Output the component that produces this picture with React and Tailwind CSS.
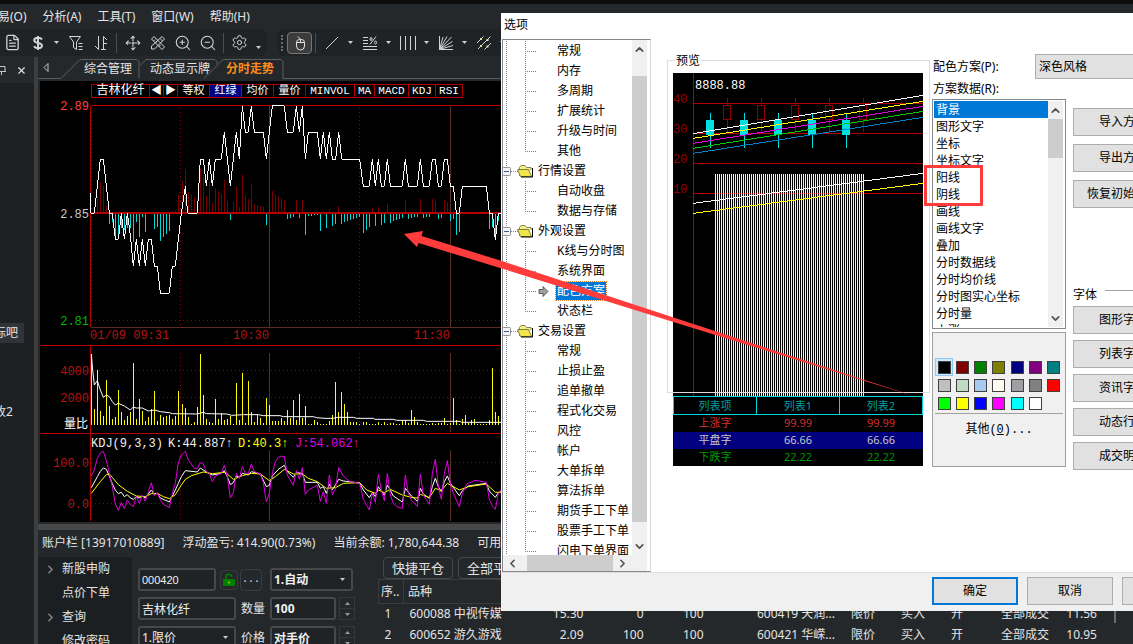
import React, { useState } from 'react';
import clsx from 'clsx';
import { FileText, Move, ZoomIn, ZoomOut, Settings, X, ChevronRight, ChevronUp, ChevronDown, ChevronLeft } from 'lucide-react';

const menus = ['交易(O)', '分析(A)', '工具(T)', '窗口(W)', '帮助(H)'];

const indicators = [
  { label: '吉林化纤', width: 'w-[58px]' },
  { label: '◀', width: 'w-[14px]' },
  { label: '▶', width: 'w-[14px]' },
  { label: '等权', width: 'w-8' },
  { label: '红绿', width: 'w-8', active: true },
  { label: '均价', width: 'w-8' },
  { label: '量价', width: 'w-8' },
  { label: 'MINVOL', width: 'w-[49px]' },
  { label: 'MA', width: 'w-5' },
  { label: 'MACD', width: 'w-[34px]' },
  { label: 'KDJ', width: 'w-[27px]' },
  { label: 'RSI', width: 'w-[27px]' },
];

// Chart series are kept in a 3x grid, one minute is 9 units wide
const price =
  '182,354 183,415 193,415 202,334 211,253 220,253 229,334 238,415 247,415 256,493 265,493 274,415 283,493 292,415 301,480 310,574 319,493 328,574 337,493 346,574 355,493 364,493 373,574 382,574 391,655 418,655 427,574 436,574 445,493 454,415 466,334 473,415 502,415 511,253 520,253 529,334 538,253 547,334 556,253 574,253 583,172 592,253 601,334 610,253 619,172 628,253 637,92 646,172 655,172 664,92 673,172 700,172 709,253 718,172 727,92 763,92 772,172 790,172 799,92 808,172 817,92 826,253 835,172 862,172 871,253 880,172 889,253 898,172 907,253 917,253 926,172 935,253 989,253 1000,334 1018,334 1027,253 1036,334 1045,253 1054,334 1063,334 1072,253 1081,334 1117,334 1126,253 1135,334 1162,334 1171,253 1180,334 1198,334 1207,253 1216,253 1225,334 1234,334 1243,253 1252,253 1261,334 1270,334 1279,415 1288,415 1297,334 1369,334 1378,415 1387,415 1396,495 1405,415 1430,415';

const upBars = [
  [202, 362], [211, 320], [220, 333], [229, 393], [427, 407], [436, 407], [445, 360], [458, 318], [467, 282], [476, 350],
  [485, 357], [494, 366], [503, 372], [512, 282], [520, 300], [529, 363], [538, 320], [547, 384], [556, 339], [565, 348],
  [574, 357], [583, 315], [592, 378], [610, 381], [619, 336], [628, 396], [637, 300], [646, 363], [655, 372], [664, 327],
  [673, 387], [682, 390], [691, 393], [700, 396], [727, 348], [736, 357], [745, 363], [754, 369], [763, 375], [799, 375],
  [817, 375], [880, 408], [898, 402], [926, 393], [1027, 399], [1045, 396], [1072, 387], [1126, 375], [1171, 372],
  [1207, 372], [1216, 378], [1243, 375], [1252, 381],
];

const downBars = [
  [238, 447], [247, 441], [256, 487], [265, 486], [274, 460], [283, 465], [292, 460], [301, 459], [310, 500], [319, 441],
  [328, 486], [337, 426], [346, 471], [373, 462], [382, 456], [391, 498], [400, 486], [409, 477], [418, 468], [601, 435],
  [709, 450], [772, 432], [781, 429], [790, 426], [808, 429], [826, 480], [835, 422], [844, 422], [853, 420], [862, 420],
  [871, 468], [889, 459], [907, 453], [916, 447], [935, 447], [943, 441], [952, 438], [961, 435], [970, 432], [979, 429],
  [988, 426], [1000, 474], [1009, 465], [1018, 456], [1036, 453], [1054, 450], [1063, 444], [1081, 444], [1090, 438],
  [1099, 435], [1108, 432], [1117, 429], [1135, 432], [1144, 429], [1153, 426], [1162, 426], [1180, 429], [1189, 426],
  [1198, 426], [1225, 432], [1234, 429], [1261, 438], [1270, 432], [1279, 480], [1288, 471], [1378, 462], [1387, 456],
  [1396, 495], [1405, 438],
];

const volumes = [
  [184, 42], [193, 207], [202, 90], [211, 212], [220, 228], [229, 120], [238, 197], [247, 237], [256, 231], [265, 150],
  [274, 216], [283, 240], [292, 228], [301, 216], [310, 69], [319, 237], [328, 177], [337, 213], [346, 243], [355, 231],
  [364, 207], [373, 153], [382, 243], [391, 225], [400, 231], [409, 228], [418, 225], [427, 237], [436, 228], [445, 153],
  [457, 192], [466, 204], [475, 231], [484, 251], [493, 246], [502, 201], [511, 42], [520, 165], [529, 237], [538, 246],
  [547, 249], [556, 177], [565, 237], [574, 219], [583, 240], [592, 237], [601, 228], [610, 251], [619, 129], [628, 240],
  [637, 99], [646, 249], [655, 123], [664, 216], [673, 246], [682, 222], [691, 234], [700, 249], [709, 174], [718, 195],
  [727, 243], [736, 243], [745, 243], [754, 234], [763, 243], [772, 210], [781, 234], [790, 180], [799, 240], [808, 162],
  [817, 234], [826, 198], [835, 251], [844, 251], [853, 240], [862, 246], [871, 251], [880, 251], [889, 251], [898, 243],
  [907, 225], [916, 126], [925, 216], [934, 156], [943, 192], [952, 216], [961, 246], [970, 246], [979, 246], [988, 251],
  [1000, 246], [1009, 246], [1018, 251], [1027, 251], [1036, 251], [1045, 246], [1054, 251], [1063, 246], [1072, 251],
  [1081, 249], [1090, 249], [1099, 251], [1108, 251], [1117, 243], [1126, 240], [1135, 249], [1144, 210], [1153, 231],
  [1162, 246], [1171, 251], [1180, 251], [1189, 251], [1198, 251], [1207, 249], [1216, 251], [1225, 249], [1234, 249],
  [1243, 234], [1252, 251], [1261, 249], [1270, 174], [1279, 240], [1288, 251], [1297, 237], [1306, 225], [1315, 249],
  [1324, 240], [1333, 237], [1342, 251], [1351, 251], [1360, 251], [1369, 251], [1378, 240], [1387, 84], [1396, 216],
  [1405, 228],
];

const volumeRatio =
  '184,42 188,90 193,135 202,122 211,150 220,172 229,165 238,170 247,185 256,195 265,190 283,198 301,210 310,201 319,204 337,204 355,213 373,210 391,215 418,218 427,221 500,222 520,217 530,221 590,222 605,226 640,224 685,224 700,227 750,227 760,230 850,230 860,233 885,235 910,235 922,232 970,232 980,235 1030,235 1035,238 1090,238 1100,241 1180,241 1190,244 1290,244 1295,247 1430,247';

const lineJ =
  '184,408 193,390 202,355 211,338 220,334 229,362 238,400 247,440 256,492 265,511 274,487 283,506 292,480 301,494 310,500 319,470 328,490 337,465 346,484 355,455 364,428 373,467 382,458 391,480 400,493 418,503 427,460 436,430 445,367 454,345 466,334 475,360 493,385 502,386 511,368 520,372 529,395 538,400 547,425 556,408 574,400 583,375 592,410 601,474 610,458 619,400 628,415 637,380 646,400 655,400 664,372 673,395 691,402 700,428 709,486 718,460 727,400 736,365 745,352 754,349 763,349 772,405 790,436 799,392 808,418 817,383 826,463 835,450 862,436 871,484 880,455 889,490 898,405 907,464 916,448 926,383 940,408 960,425 989,430 1000,478 1018,510 1027,460 1036,487 1045,403 1054,450 1063,482 1072,400 1081,465 1090,490 1100,500 1117,505 1126,405 1135,460 1144,480 1162,499 1171,403 1180,465 1198,493 1207,400 1216,358 1225,440 1234,478 1243,400 1252,362 1261,430 1270,460 1288,500 1297,460 1310,432 1335,421 1369,427 1378,478 1387,498 1396,508 1405,460 1430,430';

const lineK =
  '184,443 202,410 211,394 220,384 229,388 238,408 247,432 256,450 265,461 274,457 283,470 292,464 301,474 310,478 319,470 328,474 337,468 346,474 355,462 364,450 373,463 382,460 391,474 418,486 427,468 436,450 445,430 454,410 466,392 502,396 511,384 529,396 547,405 574,400 583,392 592,410 601,434 610,428 619,408 628,412 637,400 655,405 664,395 691,402 709,440 718,436 727,408 745,388 763,376 772,395 790,412 799,398 817,400 826,427 862,427 871,445 880,440 889,460 898,432 907,450 926,418 940,423 989,429 1000,450 1018,473 1027,458 1036,470 1045,440 1063,466 1072,435 1090,468 1117,486 1126,445 1144,468 1162,484 1171,445 1180,462 1198,475 1207,440 1216,415 1225,440 1234,455 1243,425 1252,408 1261,430 1288,467 1297,452 1315,438 1369,430 1378,453 1396,472 1405,458 1430,450';

const lineD =
  '184,460 211,425 229,404 238,402 247,412 265,434 292,454 319,468 346,470 364,461 382,460 400,470 418,476 436,464 454,435 466,418 484,407 520,396 547,401 583,397 592,402 610,418 637,407 664,400 691,402 718,422 736,410 763,388 790,402 817,402 835,415 862,425 889,445 916,443 940,430 989,428 1010,450 1036,460 1045,450 1063,458 1081,448 1117,465 1144,472 1162,474 1171,463 1198,473 1216,445 1234,452 1252,430 1288,450 1315,440 1369,432 1396,457 1430,456';

const treeGroups = [
  { items: ['常规', '内存', '多周期', '扩展统计', '升级与时间', '其他'] },
  { name: '行情设置', items: ['自动收盘', '数据与存储'] },
  { name: '外观设置', items: ['K线与分时图', '系统界面', '配色方案', '状态栏'] },
  {
    name: '交易设置',
    items: ['常规', '止损止盈', '追单撤单', '程式化交易', '风控', '帐户', '大单拆单', '算法拆单', '期货手工下单', '股票手工下单', '闪电下单界面'],
  },
];

const schemeData = [
  '背景', '图形文字', '坐标', '坐标文字', '阳线', '阴线', '画线', '画线文字', '叠加',
  '分时数据线', '分时均价线', '分时图实心坐标', '分时量', '上涨',
];

const swatches = [
  'bg-[#000000]', 'bg-[#800000]', 'bg-[#008000]', 'bg-[#808000]', 'bg-[#000080]', 'bg-[#800080]', 'bg-[#008080]',
  'bg-[#c0c0c0]', 'bg-[#c0dcc0]', 'bg-[#a6caf0]', 'bg-[#fffbf0]', 'bg-[#a0a0a4]', 'bg-[#808080]', 'bg-[#ff0000]',
  'bg-[#00ff00]', 'bg-[#ffff00]', 'bg-[#0000ff]', 'bg-[#ff00ff]', 'bg-[#00ffff]', 'bg-[#ffffff]',
];

const previewRows = [
  { name: '上涨字', value: '99.99', style: 'text-[#d03030]' },
  { name: '平盘字', value: '66.66', style: 'bg-[#000080] text-[#c8c8c8]' },
  { name: '下跌字', value: '22.22', style: 'text-[#009a00]' },
];

const positions = [
  ['1', '600088 中视传媒', '15.30', '0', '100'],
  ['2', '600652 游久游戏', '2.09', '100', '100'],
];

const orders = [
  ['600419 天润...', '限价', '买入', '开', '全部成交', '11.56'],
  ['600421 华嵘...', '限价', '买入', '开', '全部成交', '10.95'],
];

const Caret = () => (
  <span className="flex w-[13px] justify-center">
    <svg width="5" height="3" fill="#d0d0d0"><path d="M0 0h5L2.5 3z" /></svg>
  </span>
);

const Divider = () => (
  <span className="flex w-[7px] justify-center">
    <span className="h-5 w-px bg-[#4b4e51]" />
  </span>
);

const ToolButton = ({ label, children }) => (
  <button aria-label={label} className="flex h-6 w-[25px] items-center justify-center text-[#d4d4d4]">
    {children}
  </button>
);

const Icon = ({ children }) => (
  <svg width="16" height="16" viewBox="0 0 16 16" fill="none" stroke="currentColor" strokeWidth="1">
    {children}
  </svg>
);

const Toolbar = () => (
  <div className="flex h-[29px] items-center">
    <div className="flex h-[27px] items-center rounded-r-md bg-[#1f2326] pr-0.5">
      <ToolButton label="文件"><FileText size={17} strokeWidth={1.8} /></ToolButton>
      <ToolButton label="资金">
        <Icon>
          <path strokeWidth="2" d="M12 4.500C11 3 9.500 2.800 8 2.800 5.500 2.800 4.200 3.800 4.200 5.300 4.200 9 12 6.800 12 10.600 12 12.300 10.300 13.200 8 13.200 6 13.200 4.700 12.600 4 11.300M8 1v14" />
        </Icon>
      </ToolButton>
      <Caret />
      <ToolButton label="筛选">
        <Icon><path d="M1.500 1.500h11L8.500 7v7.500l-3-2V7zM10.500 8.500h4M10.500 11.500h4M10.500 14.500h4" /></Icon>
      </ToolButton>
      <ToolButton label="排序">
        <Icon><path d="M5.500 1v13.500L2 11M10.500 15V1.500L14 5M8 14.500h5M11 8.500h3" /></Icon>
      </ToolButton>
      <Divider />
      <ToolButton label="移动"><Move size={16} strokeWidth={1.6} strokeDasharray="7 2" /></ToolButton>
      <ToolButton label="画图工具">
        <Icon>
          <path d="M1.500 4l2.500-2.500L14.500 12 12 14.500zM12 1.500L14.500 4 4.500 14H1.500v-3zM3.500 6l1.500-1.500M5.500 8L7 6.500M9 11.500l1.500-1.500M10 3.500l2.500 2.500" />
        </Icon>
      </ToolButton>
      <ToolButton label="放大"><ZoomIn size={18} strokeWidth={1.4} /></ToolButton>
      <ToolButton label="缩小"><ZoomOut size={18} strokeWidth={1.4} /></ToolButton>
      <Divider />
      <ToolButton label="设置"><Settings size={17} strokeWidth={1.4} /></ToolButton>
      <span className="pt-2.5"><Caret /></span>
    </div>
    <div className="ml-2.5 flex h-[27px] flex-1 items-center rounded-l-md bg-[#1f2326]">
      <span className="flex w-2.5 justify-center">
        <span className="h-4 border-l-2 border-dotted border-[#6a6d70]" />
      </span>
      <button aria-label="鼠标" className="flex h-[22px] w-[25px] items-center justify-center rounded border border-[#757575] bg-[#3c3c3c] text-[#e4e4e4]">
        <Icon>
          <path d="M4.500 7.500h8v3.500a4 4 0 0 1-8 0V7.500a3 3 0 0 1 3-3h2a3 3 0 0 1 3 3M8.500 4.500v3M8.500 4.500C8.500 3 6 3 6 1.500" />
        </Icon>
      </button>
      <Divider />
      <ToolButton label="直线"><Icon><path d="M2 14L14 2" /></Icon></ToolButton>
      <Caret />
      <ToolButton label="百分比线">
        <Icon><path d="M1 2.500h5M1 5.500h5M1 8.500h5M1 11.500h14M1 14.500h14M14 1.500L8 9.500M8 4a1 1.500 0 1 0 2 0 1 1.500 0 1 0-2 0M12.500 7.500a1 1.500 0 1 0 2 0 1 1.500 0 1 0-2 0" /></Icon>
      </ToolButton>
      <Caret />
      <ToolButton label="周期线"><Icon><path d="M.5 1v14M5.500 1v14M10.500 1v14M15.500 1v14" /></Icon></ToolButton>
      <Caret />
      <ToolButton label="甘氏线">
        <Icon><path d="M1.500 1v13.500H15M1.500 14.500L5 2M1.500 14.500L9 1.500M1.500 14.500L13.500 2M1.500 14.500l13-8M1.500 14.500l13.500-4" /></Icon>
      </ToolButton>
      <Caret />
      <ToolButton label="平行线">
        <Icon>
          <path d="M1 8l6.500-6.500M2 14L14.500 1.500M8.500 14.500l6.500-6.500" />
          <g fill="#e0e0a0" stroke="none"><path d="M4 3h2v2H4zM10.500 4h2v2h-2zM4 10h2v2H4zM10.500 10.500h2v2h-2z" /></g>
        </Icon>
      </ToolButton>
      <Caret />
    </div>
  </div>
);

const TabBar = () => (
  <div className="relative flex h-6 items-start text-[#e4e4e4]">
    <svg className="absolute inset-0" width="100%" height="24" fill="none" stroke="#5b5e60">
      <path d="M0 21.500h23L42 2.500h57l2 2v17" />
      <path d="M102 8.500l6-6h69l2 2v3" />
      <path fill="#24282b" d="M166 21.500l19-19h58l2 2v17" />
      <path d="M245 21.500h1200" />
    </svg>
    <button aria-label="向左" className="relative mt-1.5 ml-1">
      <svg width="8" height="9" fill="none" stroke="#c0c0c0"><path d="M6 .5v8L2 4.500z" /></svg>
    </button>
    <button className="relative ml-[34px] h-6 leading-6">综合管理</button>
    <button className="relative ml-[18px] h-6 leading-6">动态显示牌</button>
    <button className="relative ml-4 h-6 font-bold leading-6 text-[#ff8c1a]">分时走势</button>
  </div>
);

const Chart = () => (
  <div className="ml-0.5 bg-black pt-[3px] font-['Liberation_Mono','Noto_Sans_CJK_SC',monospace] text-xs">
    <div className="ml-[51px] flex h-[14px] w-fit border border-r-0 border-[#b40000] text-white">
      {indicators.map((item) => (
        <button
          key={item.label}
          className={clsx(
            item.width,
            item.active && 'bg-[#000080]',
            'flex h-3 shrink-0 items-center justify-center border-r border-[#b40000] text-[11px] leading-3 first:text-xs'
          )}
        >
          {item.label}
        </button>
      ))}
    </div>
    <svg className="block w-full" height="424" shapeRendering="crispEdges">
      {/* price pane */}
      <g transform="translate(-10 -23) scale(0.33333)" fill="none" strokeWidth="3">
        <path stroke="#5a2f20" d="M718 92v665M1261 92v665M182 757h2000" />
        <g stroke="#8e0000" strokeDasharray="3 9">
          <path d="M185 100v655M451 100v655M988 100v655M194 736h2000" />
        </g>
        <path stroke="#b40000" d="M182 757V92h2000" />
        <g stroke="#780000">{upBars.map(([x, y]) => <path key={x} d={`M${x} 411V${y}`} />)}</g>
        <g stroke="#00d8d8">{downBars.map(([x, y]) => <path key={x} d={`M${x} 416V${y}`} />)}</g>
        <path stroke="#b40000" strokeWidth="6" d="M182 413h2000" />
        <polyline stroke="#fff" points={price} />
      </g>
      {/* volume and KDJ panes */}
      <g transform="translate(-10 242) scale(0.33333)" fill="none" strokeWidth="3">
        <path stroke="#5a2f20" d="M718 40v235M718 330v213M1261 40v235M1261 330v213" />
        <g stroke="#8e0000" strokeDasharray="3 9">
          <path d="M451 40v235M988 40v235M451 330v213M988 330v213M185 330v213" />
          <path d="M194 92h2000M194 172h2000M194 367h2000M194 490h2000" />
        </g>
        <path stroke="#b40000" d="M30 16h2000M30 281h2000M182 16v527" />
        <g stroke="#ff0">{volumes.map(([x, y]) => <path key={x} d={`M${x} 255V${y}`} />)}</g>
        <g shapeRendering="auto">
          <polyline stroke="#fff" points={volumeRatio} />
          <polyline stroke="#fff" points={lineK} />
          <polyline stroke="#ff0" points={lineD} />
          <polyline stroke="#e000e0" points={lineJ} />
        </g>
      </g>
      <g fill="#b41414">
        <text x="49" y="12" textAnchor="end" fill="#ff4040">2.89</text>
        <text x="49" y="120" textAnchor="end" fill="#c8c8c8">2.85</text>
        <text x="49" y="227" textAnchor="end" fill="#00b400">2.81</text>
        <text x="50" y="241">01/09 09:31</text>
        <text x="193" y="241">10:30</text>
        <text x="374" y="241">11:30</text>
        <text x="49" y="277" textAnchor="end">4000</text>
        <text x="49" y="304" textAnchor="end">2000</text>
        <text x="48" y="330" textAnchor="end" fill="#fff">量比</text>
        <text x="49" y="369" textAnchor="end">100.0</text>
        <text x="49" y="410" textAnchor="end">0.0</text>
      </g>
      <text y="349" fill="#f0f0f0">
        <tspan x="51">KDJ(9,3,3)</tspan>
        <tspan x="128">K:44.887↑</tspan>
        <tspan x="198" fill="#ff0">D:40.3↑</tspan>
        <tspan x="255" fill="#e000e0">J:54.062↑</tspan>
      </text>
    </svg>
  </div>
);

const fieldStyle = 'h-[23px] rounded-[3px] border-2 border-[#46484a] bg-[#1f2326] px-0.5 text-[#f0f0f0] outline-none';

const Spinner = () => (
  <span className="flex h-[23px] w-4 flex-col border border-[#34383b] text-[#9a9a9a]">
    <button type="button" aria-label="增加" className="flex flex-1 items-center justify-center border-b border-[#34383b]">
      <svg width="5" height="3" fill="currentColor"><path d="M0 3h5L2.500 0z" /></svg>
    </button>
    <button type="button" aria-label="减少" className="flex flex-1 items-center justify-center">
      <svg width="5" height="3" fill="currentColor"><path d="M0 0h5L2.500 3z" /></svg>
    </button>
  </span>
);

const DarkSelect = ({ label, value, className }) => (
  <span className={clsx('relative flex', className)}>
    <select aria-label={label} className={clsx(fieldStyle, 'w-full appearance-none')}>
      <option>{value}</option>
    </select>
    <svg className="pointer-events-none absolute top-2.5 right-2" width="5" height="3" fill="#c8c8c8"><path d="M0 0h5L2.500 3z" /></svg>
  </span>
);

const OrderForm = () => (
  <form className="flex w-[246px] shrink-0 flex-col gap-1.5 pt-[11px] pl-1.5">
    <div className="flex items-center">
      <input aria-label="代码" defaultValue="000420" className={clsx(fieldStyle, "w-[78px] font-['Liberation_Sans',sans-serif] text-[11px]")} />
      <button type="button" aria-label="锁定" className="ml-1 flex h-5 w-[18px] items-center justify-center rounded border border-[#3a3d40]">
        <svg width="12" height="13" viewBox="0 0 12 13" fill="none">
          <path stroke="#008000" strokeWidth="1.500" d="M3 6V3.500C3 .5 8.500 .5 8.500 3V4" />
          <path fill="#008000" d="M0 6h12v7H0z" />
          <path fill="#ff0" d="M5.500 8.500h1v2h-1z" />
        </svg>
      </button>
      <button type="button" className="ml-0.5 h-[22px] w-[22px] rounded border border-[#3a3d40] font-['Liberation_Mono',monospace] text-[10px] leading-4">...</button>
      <DarkSelect label="开平" value="1.自动" className="ml-2 w-[83px] font-bold" />
    </div>
    <div className="flex items-center">
      <input aria-label="名称" defaultValue="吉林化纤" className={clsx(fieldStyle, 'w-[98px]')} />
      <label htmlFor="amount" className="ml-[5px] w-[29px]">数量</label>
      <input id="amount" defaultValue="100" className={clsx(fieldStyle, 'w-[66px] font-bold')} />
      <span className="ml-[3px]"><Spinner /></span>
    </div>
    <div className="flex items-center">
      <DarkSelect label="委托类型" value="1.限价" className="w-[98px]" />
      <label htmlFor="price" className="ml-[5px] w-[29px]">价格</label>
      <input id="price" defaultValue="对手价" className={clsx(fieldStyle, 'w-[66px] font-bold')} />
      <span className="ml-[3px]"><Spinner /></span>
    </div>
  </form>
);

const Trading = () => (
  <div className="flex flex-1 overflow-hidden">
    <ul className="w-[94px] shrink-0 bg-[#1b1f21] leading-6">
      {['新股申购', '点价下单', '查询', '修改密码'].map((name, i) => (
        <li key={name} className="flex items-center pl-1.5">
          <span className="w-[18px]">{i % 2 === 0 && <ChevronRight size={13} strokeWidth={3} className="text-[#808080]" />}</span>
          {name}
        </li>
      ))}
    </ul>
    <OrderForm />
    <div className="min-w-0 flex-1">
      <div className="flex gap-[5px] pl-[5px] text-[13px]">
        <button className="h-[22px] w-[70px] rounded border border-[#45484b] leading-5">快捷平仓</button>
        <button className="h-[22px] w-[70px] rounded border border-[#45484b] leading-5">全部平仓</button>
      </div>
      <div className="flex">
        <table className="w-[347px] table-fixed border-collapse text-right">
          <thead>
            <tr className="h-6 border border-[#3a3d40] text-left">
              <th className="w-[25px] border border-[#3a3d40] pl-0.5 font-normal">序..</th>
              <th className="w-[120px] pl-1 font-normal">品种</th>
              <th className="w-[60px]" />
              <th className="w-[60px]" />
              <th className="w-[60px]" />
              <th />
            </tr>
          </thead>
          <tbody>
            {positions.map((row) => (
              <tr key={row[0]} className="h-[21px]">
                <td className="pl-1.5 text-left">{row[0]}</td>
                <td className="pl-1.5 text-left whitespace-nowrap">{row[1]}</td>
                <td>{row[2]}</td>
                <td>{row[3]}</td>
                <td>{row[4]}</td>
              </tr>
            ))}
          </tbody>
        </table>
        <table className="ml-[26px] w-[346px] table-fixed border-collapse text-left">
          <thead>
            <tr className="h-6">
              <th className="w-[94px]" />
              <th className="w-[50px]" />
              <th className="w-[50px]" />
              <th className="w-[50px]" />
              <th className="w-[60px]" />
              <th />
            </tr>
          </thead>
          <tbody>
            {orders.map((row) => (
              <tr key={row[0]} className="h-[21px] whitespace-nowrap">
                {row.map((cell) => (
                  <td key={cell} className="pl-1.5 last:pl-0 last:text-right">{cell}</td>
                ))}
              </tr>
            ))}
          </tbody>
        </table>
        <div className="ml-[17px] h-11 w-0.5 shrink-0 bg-[#6a6d70]" />
      </div>
    </div>
  </div>
);

const ItemGuide = ({ last, active }) => (
  <svg width="54" height="20" className="shrink-0" shapeRendering="crispEdges">
    <g stroke="#808080" strokeDasharray="1 1">
      <path d="M3.500 0v20" />
      <path d={last ? 'M22.500 0v10' : 'M22.500 0v20'} />
      <path d="M22 10.500h11" />
    </g>
    {active && <path d="M36 8.500h4v-3l5 5-5 5v-3h-4z" fill="#a0a0a0" stroke="#303030" strokeWidth=".7" shapeRendering="auto" />}
  </svg>
);

const GroupGuide = () => (
  <svg width="35" height="20" className="shrink-0">
    <path d="M3.500 0v20M8 10.500h7" stroke="#808080" strokeDasharray="1 1" />
    <rect x="-.5" y="6.500" width="8" height="8" rx="1" fill="#f4f4f4" stroke="#909090" />
    <path d="M1 10.500h5" stroke="#3c5aa0" />
    <path d="M16.500 15V6.500l1.500-2h4l1.500 2H28v2.500" fill="#f8f080" stroke="#808060" />
    <path d="M14.500 8.500h11l3 7h-11z" fill="#f0e64a" stroke="#808040" />
    <path d="M29.500 7v9H18" fill="none" stroke="#000" />
  </svg>
);

const ScrollBar = ({ thumb }) => (
  <div className="flex w-[15px] shrink-0 flex-col items-center bg-[#f0f0f0] text-[#505050]">
    <button aria-label="向上滚动" className="flex h-[18px] items-center"><ChevronUp size={13} strokeWidth={3} /></button>
    <div className={clsx('w-full bg-[#cdcdcd]', thumb)} />
    <button aria-label="向下滚动" className="mt-auto flex h-[18px] items-center"><ChevronDown size={13} strokeWidth={3} /></button>
  </div>
);

const OptionsTree = ({ selected, onSelect }) => (
  <div className="mt-px ml-px flex w-[149px] shrink-0 flex-col overflow-hidden border border-[#828790] border-r-[#d8d8d8] bg-white pr-[3px]">
    <div className="flex h-[515px]">
      <ul className="flex-1 overflow-hidden pt-px whitespace-nowrap">
        {treeGroups.map((group, g) => (
          <li key={g}>
            {group.name && (
              <div className="flex h-5 items-center"><GroupGuide />{group.name}</div>
            )}
            <ul>
              {group.items.map((name, i) => {
                const active = selected === name;
                return (
                  <li key={name} className="flex h-5 cursor-default items-center" onClick={() => onSelect(name)}>
                    <ItemGuide last={i === group.items.length - 1} active={active} />
                    <span className={clsx('-mx-px px-px leading-[18px]', active && 'bg-[#0078d7] text-white outline-1 outline-dotted outline-[#e08020]')}>
                      {name}
                    </span>
                  </li>
                );
              })}
            </ul>
          </li>
        ))}
      </ul>
      <ScrollBar thumb="mt-[18px] h-[446px]" />
    </div>
    <div className="flex h-4 items-center bg-[#f0f0f0] text-[#505050]">
      <button aria-label="向左滚动" className="w-6 pl-[3px]"><ChevronLeft size={13} strokeWidth={3} /></button>
      <div className="h-full w-[86px] bg-[#cdcdcd]" />
      <button aria-label="向右滚动" className="pl-[3px]"><ChevronRight size={13} strokeWidth={3} /></button>
    </div>
  </div>
);

const Preview = () => (
  <section className="relative mt-[14px] ml-4 w-[263px] shrink-0 pl-1.5">
    <h2 className="relative z-10 ml-0.5 h-[18px] w-fit bg-white px-px leading-[18px]">预览</h2>
    <div className="relative mt-[3px] w-[250px] bg-black font-['Liberation_Mono','Noto_Sans_CJK_SC',monospace] text-xs">
      <svg className="block w-full" height="323" shapeRendering="crispEdges">
        <g transform="translate(-13 -33) scale(0.33333)" fill="none" strokeWidth="3">
          <path stroke="#b40000" d="M100 99v969M100 190h689M100 280h689M100 370h689M100 460h689" />
          {[202, 304, 406, 508, 610].map((x) => (
            <path key={x} stroke="#960000" d={`M${x} 175v21M${x - 11} 196h21v43h-21zM${x} 239v38`} />
          ))}
          {[151, 253, 355, 457, 559].map((x) => (
            <g key={x}>
              <path stroke="#00e0e0" d={`M${x} 219v105`} />
              <path fill="#00e0e0" d={`M${x - 13} 240h24v45h-24z`} />
            </g>
          ))}
          <path stroke="#ffff80" strokeWidth="666" strokeDasharray="3 3" d="M166 735h445" />
          <path stroke="#fff" d="M100 281L789 166M100 490l689-90" />
          <path stroke="#ff0" d="M100 295l689-111M100 520l689-90" />
          <path stroke="#e000e0" d="M100 310l689-111" />
          <path stroke="#00c800" d="M100 325l689-111" />
          <path stroke="#0080c8" d="M100 340l689-108" />
        </g>
        <text x="22" y="16" fill="#fff">8888.88</text>
        <g fill="#960000">
          <text y="30">40</text>
          <text y="60">30</text>
          <text y="90">20</text>
          <text y="120">10</text>
        </g>
      </svg>
      <table className="w-full table-fixed border-collapse text-center font-['Noto_Sans','Noto_Sans_CJK_SC',sans-serif] text-[11px] leading-4">
        <thead>
          <tr className="h-[18px] text-[#00a0a0]">
            {['列表项', '列表1', '列表2'].map((name) => (
              <th key={name} className="border border-[#00d8d8] font-normal">{name}</th>
            ))}
          </tr>
        </thead>
        <tbody>
          {previewRows.map((row) => (
            <tr key={row.name} className={clsx('h-[17px]', row.style)}>
              <td>{row.name}</td>
              <td>{row.value}</td>
              <td>{row.value}</td>
            </tr>
          ))}
        </tbody>
      </table>
    </div>
    <div className="pointer-events-none absolute inset-x-0 top-2 h-[333px] border border-[#dcdcdc]" />
  </section>
);

const winButton = 'flex h-7 w-[100px] items-center justify-center border border-[#adadad] bg-[#e1e1e1]';
const footerButton = 'h-7 w-[86px] shrink-0 bg-[#e1e1e1]';

const SchemePanel = () => {
  const [item, setItem] = useState('背景');
  const [color, setColor] = useState(0);

  return (
    <section className="ml-0.5 shrink-0 pt-4">
      <div className="flex items-center">
        <label htmlFor="scheme" className="w-[103px] pl-px">配色方案(P):</label>
        <select id="scheme" className="h-[25px] w-[140px] appearance-none border border-[#adadad] bg-[#e1e1e1] pl-[3px]">
          <option>深色风格</option>
        </select>
      </div>
      <p id="scheme-data" className="h-5 pl-px leading-5">方案数据(R):</p>
      <div className="flex gap-[7px]">
        <div className="w-[134px]">
          <div className="flex h-[230px] border border-[#828790] p-px pr-0.5">
            <ul role="listbox" aria-labelledby="scheme-data" className="flex-1 overflow-hidden">
              {schemeData.map((name) => (
                <li
                  key={name}
                  role="option"
                  aria-selected={item === name}
                  onClick={() => setItem(name)}
                  className={clsx('h-[17px] pl-0.5 leading-[17px]', item === name && 'bg-[#0078d7] text-white')}
                >
                  {name}
                </li>
              ))}
            </ul>
            <ScrollBar thumb="h-[39px]" />
          </div>
          <div className="mt-[3px] h-[135px] border border-[#a0a0a0] bg-[#f0f0f0] px-0.5 pt-[25px]">
            <div className="grid grid-cols-7">
              {swatches.map((swatch, i) => (
                <button
                  key={swatch}
                  aria-label={swatch.slice(4, -1)}
                  onClick={() => setColor(i)}
                  className={clsx('flex size-[18px] items-center justify-center', color === i && 'border border-[#90c8f6] bg-[#cce8ff]')}
                >
                  <span className={clsx('size-[13px] shrink-0 border border-[#404040]', swatch)} />
                </button>
              ))}
            </div>
            <hr className="mt-px border-t border-[#a0a0a0]" />
            <button className="mt-2 w-full font-['Liberation_Mono','Noto_Sans_CJK_SC',monospace]">
              其他(<u>0</u>)...
            </button>
          </div>
        </div>
        <div>
          <div className="mt-[9px] flex flex-col gap-2">
            <button className={winButton}>导入方案</button>
            <button className={winButton}>导出方案</button>
            <button className={winButton}>恢复初始设置</button>
          </div>
          <div className="mt-[79px] flex h-[15px] leading-[15px]">
            字体
            <span className="mt-[3px] ml-2 h-px flex-1 bg-[#a0a0a0]" />
          </div>
          <div className="mt-1 flex flex-col gap-1.5">
            {['图形字体', '列表字体', '资讯字体', '动态行情', '成交明细'].map((name) => (
              <button key={name} className={winButton}>{name}</button>
            ))}
          </div>
        </div>
      </div>
    </section>
  );
};

const OptionsDialog = () => {
  const [selected, setSelected] = useState('配色方案');

  return (
    <div role="dialog" aria-label="选项" className="absolute top-[13px] left-[501px] w-[715px] bg-white text-black">
      <h1 className="h-[25px] pl-[3px] leading-[23px]">选项</h1>
      <div className="flex h-[534px]">
        <OptionsTree selected={selected} onSelect={setSelected} />
        <Preview />
        <SchemePanel />
      </div>
      <div className="flex h-[39px] gap-[9px] border-t border-[#dfdfdf] bg-[#f0f0f0] pt-1 pl-[431px]">
        <button className={clsx(footerButton, 'border-2 border-[#0078d7]')}>确定</button>
        <button className={clsx(footerButton, 'border border-[#adadad]')}>取消</button>
        <button className={clsx(footerButton, 'border border-[#adadad]')}>应用</button>
      </div>
    </div>
  );
};

const App = () => (
  <div className="relative flex h-screen flex-col overflow-hidden bg-[#24282b] font-['Noto_Sans','Noto_Sans_CJK_SC',sans-serif] text-xs text-[#e4e4e4]">
    <div className="h-1 shrink-0 bg-[#0c0c0c]" />
    <nav className="-ml-[14px] flex h-6 shrink-0 items-center gap-4 pt-0.5">
      {menus.map((name) => <button key={name}>{name}</button>)}
    </nav>
    <Toolbar />
    <div className="flex min-h-0 flex-1">
      <aside className="w-[34px] shrink-0 bg-[#1d2124]">
        <div className="flex h-[26px] items-center bg-[#24282b]">
          <svg width="8" height="10" fill="none" stroke="#c8c8c8"><path d="M0 1.500h5v5M0 6.500h6M1.500 6.500V10" /></svg>
          <button aria-label="关闭" className="ml-2"><X size={11} strokeWidth={2.5} /></button>
        </div>
        <div className="mt-[240px] -ml-1.5 h-5 w-[30px] bg-[#303438] leading-5">标吧</div>
        <div className="mt-[59px] -ml-1.5 leading-5">收2</div>
      </aside>
      <div className="w-1 shrink-0 bg-[#3c3e40]" />
      <main className="flex min-w-0 flex-1 flex-col">
        <TabBar />
        <Chart />
        <div className="mt-0.5 h-1.5 shrink-0 bg-[#484848]" />
        <div className="flex h-[27px] shrink-0 items-center gap-[18px] pb-0.5 pl-1 whitespace-nowrap">
          <span>账户栏 [13917010889]</span>
          <span>浮动盈亏: 414.90(0.73%)</span>
          <span>当前余额: 1,780,644.38</span>
          <span>可用余额</span>
        </div>
        <Trading />
      </main>
    </div>
    <OptionsDialog />
    <svg className="pointer-events-none absolute inset-0" width="100%" height="100%">
      <path fill="#ff3b3b" d="M404 234l19-3-1.500 5L505 262l170 56 245 80-245-75.500L505 269.500 418.500 243 417 247z" />
      <rect x="925.500" y="166.500" width="56" height="38" fill="none" stroke="#ff3b3b" strokeWidth="3" />
    </svg>
  </div>
);

export default App;
